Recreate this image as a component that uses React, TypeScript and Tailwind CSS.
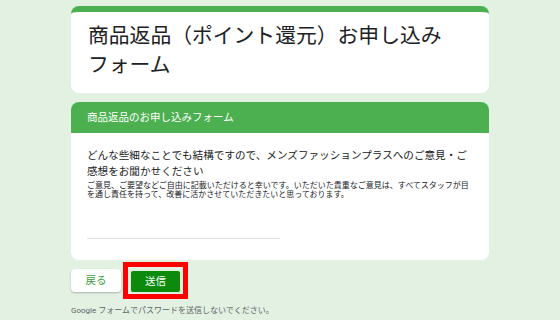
const jp = "font-['Roboto','Noto_Sans_CJK_JP',sans-serif]";

export default function App() {
  return (
    <div className={`${jp} w-[560px] h-[320px] overflow-hidden bg-[#e3f1e3] pt-[6px]`}>
      <div className="mx-auto w-[418px] flex flex-col gap-[9px]">
        {/* title card */}
        <div className="bg-white rounded-[8px] border-t-[6px] border-[#4caf50] pl-[17px] pr-[30px] pt-[10px] pb-[13px]">
          <h1 className="text-[20.8px] leading-[29px] text-[#202124] font-normal">
            商品返品（ポイント還元）お申し込みフォーム
          </h1>
        </div>

        {/* question card */}
        <div className="bg-white rounded-[8px] overflow-hidden">
          <div className="bg-[#4caf50] h-[31px] flex items-center pl-[16px] text-[10.5px] text-white">
            商品返品のお申し込みフォーム
          </div>
          <div className="pl-[16px] pr-[16px] pt-[15px] pb-[21px]">
            <p className="text-[10.6px] leading-[16px] text-[#202124]">
              どんな些細なことでも結構ですので、メンズファッションプラスへのご意見・ご感想をお聞かせください
            </p>
            <p className="mt-[1px] text-[8px] leading-[9px] text-[#202124]">
              ご意見、ご要望などご自由に記載いただけると幸いです。いただいた貴重なご意見は、すべてスタッフが目を通し責任を持って、改善に活かさせていただきたいと思っております。
            </p>
            <div className="mt-[16px] w-1/2 h-[24px] border-b border-[#e0e0e0]" />
          </div>
        </div>
      </div>

      <div className="mx-auto w-[418px] mt-[2px] flex items-center gap-[2px]">
        <button className="w-[50px] h-[23px] rounded-[4px] bg-white shadow-[0_1px_2px_rgba(0,0,0,0.25)] text-[10.5px] text-[#3c9d40]">
          戻る
        </button>
        <div className="border-[5px] border-[#ff0000] px-[2px] py-[1px]">
          <button className="w-[51px] h-[23px] rounded-[3px] bg-[#0b8a0b] border border-[#dcefdc] text-[10.5px] text-white">
            送信
          </button>
        </div>
      </div>

      <p className="mx-auto w-[418px] mt-[6px] text-[8px] leading-[12px] text-[#5f6368]">
        Google フォームでパスワードを送信しないでください。
      </p>
    </div>
  );
}
